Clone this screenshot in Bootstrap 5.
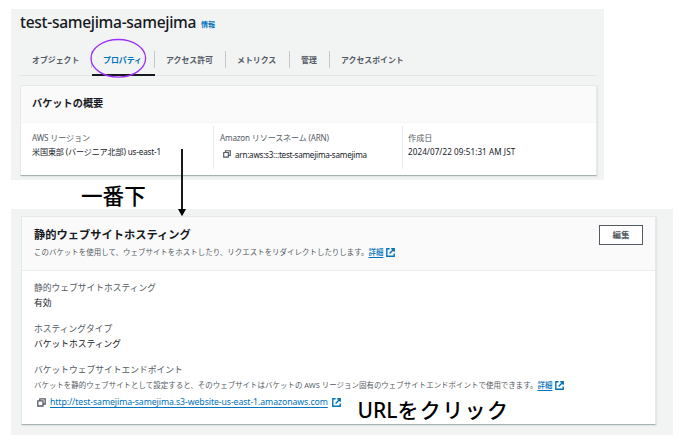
<!DOCTYPE html>
<html lang="ja">
<head>
<meta charset="utf-8">
<meta name="viewport" content="width=device-width, initial-scale=1">
<title>test-samejima-samejima</title>
<link href="https://cdn.jsdelivr.net/npm/bootstrap@5.3.0/dist/css/bootstrap.min.css" rel="stylesheet">
<style>
  body { font-family: "Noto Sans", "Noto Sans CJK JP", sans-serif; font-size: 8.1px; line-height: 14px; color: #16191f; background: #fff; width: 680px; height: 442px; overflow: hidden; padding: 9px 0 0 11px; white-space: nowrap; }
  a { color: #0073bb; }
  .bucket-panel { background: #f2f3f3; width: 593px; height: 171px; padding: 0 7px 0 9px; }
  .hosting-panel { background: #f2f3f3; width: 662px; height: 226px; padding: 7px 17px 0 10px; margin-top: 29px; }
  .title-row { height: 26px; }
  .bucket-title { font-size: 15.6px; font-weight: 500; line-height: 27px; margin: 0; letter-spacing: -.32px; }
  .info-link { font-size: 7px; font-weight: 700; line-height: 31px; text-decoration: none; margin-left: 5px; }
  .bucket-tabs { height: 25px; margin-top: 16px; border-bottom: 1px solid #e3e6e6; flex-wrap: nowrap; }
  .bucket-tabs .nav-link { position: relative; padding: 0 12px; height: 25px; line-height: 18px; font-size: 7.9px; font-weight: 700; color: #545b64; }
  .bucket-tabs .nav-item + .nav-item .nav-link::before { content: ""; position: absolute; left: 0; top: 0; width: 1px; height: 17px; background: #c3c8c9; }
  .bucket-tabs .nav-link.active { color: #0073bb; }
  .bucket-tabs .nav-link.active::after { content: ""; position: absolute; left: 1px; right: -1px; bottom: 0; height: 2px; background: #16191f; }
  .t1 { width: 71px; } .t2 { width: 63px; } .t3 { width: 71px; } .t4 { width: 64px; } .t5 { width: 40px; }
  .aws-card { border: 1px solid #e6e9e9; border-bottom-color: #a9b2b2; border-radius: 0; box-shadow: 1px 1px 1px #e2e6e6; }
  .aws-card .card-header { background: #fafafa; border-bottom: 1px solid #eaeded; border-radius: 0; }
  .overview { margin-top: 9px; height: 91px; }
  .overview .card-header { height: 37px; padding: 9px 11px; border-bottom-color: #f5f6f6; }
  .overview h2 { font-size: 10.2px; font-weight: 700; line-height: 16px; margin: 0; }
  .facts { padding-top: 3px; }
  .fact { height: 43px; padding: 5px 0 0 6px; line-height: 13.5px; }
  .fact + .fact { border-left: 1px solid #eaeded; }
  .fact.region { width: 192px; padding-left: 11px; letter-spacing: -.15px; }
  .fact.arn { width: 189px; letter-spacing: -.18px; }
  .fact.created { padding-left: 5px; letter-spacing: .08px; }
  .arn-value { margin-top: 3px; padding-left: 3px; letter-spacing: -.24px; }
  .dim { color: #545b64; }
  .hosting { height: 209px; }
  .hosting .card-header { height: 54px; padding: 10px 12px 0 12px; }
  .hosting h2 { font-size: 11.25px; font-weight: 700; line-height: 16px; margin: 0; }
  .note { font-size: 7.47px; color: #545b64; line-height: 14px; }
  .note a { font-weight: 500; }
  .note svg { margin-left: 3px; }
  .hosting .card-header .note { margin-top: 2px; }
  .edit-btn { width: 44px; height: 20px; margin: -2px 0 0 0; padding: 0; border: 1px solid #545b64; border-radius: 0; background: #fff; color: #545b64; font-size: 8.5px; font-weight: 700; line-height: 18px; }
  .hosting .card-body { padding: 10px 12px; font-size: 8.75px; }
  .fieldset-gap { margin-bottom: 12px; height: 29px; line-height: 15px; }
  .endpoint { height: 15px; line-height: 14px; }
  .url-row { font-size: 8.75px; margin: 3px 0 0 3px; letter-spacing: -.1px; }
  .url-row a, .note a { text-underline-offset: 2px; }
  svg { display: inline-block; flex: none; }
  .annot { position: absolute; color: #000; font-weight: 500; }
  .a-bottom { left: 81px; top: 181px; font-size: 21.6px; line-height: 30px; }
  .a-click { left: 357.5px; top: 395px; font-size: 21px; line-height: 30px; }
  .a-click span { letter-spacing: 1.35px; }
  .a-lines { position: absolute; left: 0; top: 0; pointer-events: none; }
</style>
<script src="https://cdn.jsdelivr.net/npm/bootstrap@5.3.0/dist/js/bootstrap.bundle.min.js"></script>
</head>
<body>
<svg width="0" height="0" class="position-absolute">
  <symbol id="copy" viewBox="0 0 9 9"><path d="M.8 2.8h5.2v5.2H.8zM2.8 2.6V.8h5.4v5.2H6.2" fill="none" stroke="#545b64" stroke-width="1.3"/></symbol>
  <symbol id="ext" viewBox="0 0 9 9"><path d="M3.6.8H.8v7.4h7.4V5.4M5.2.8h3v3M8 1 3.6 5.4" fill="none" stroke="#0073bb" stroke-width="1.4"/></symbol>
</svg>

<section class="bucket-panel">
  <div class="title-row d-flex align-items-start"><h1 class="bucket-title">test-samejima-samejima</h1><a href="#" class="info-link">情報</a></div>
  <ul class="nav bucket-tabs">
    <li class="nav-item t1"><a class="nav-link" href="#">オブジェクト</a></li>
    <li class="nav-item t2"><a class="nav-link active" href="#">プロパティ</a></li>
    <li class="nav-item t3"><a class="nav-link" href="#">アクセス許可</a></li>
    <li class="nav-item t4"><a class="nav-link" href="#">メトリクス</a></li>
    <li class="nav-item t5"><a class="nav-link" href="#">管理</a></li>
    <li class="nav-item"><a class="nav-link" href="#">アクセスポイント</a></li>
  </ul>
  <div class="card aws-card overview">
    <div class="card-header"><h2>バケットの概要</h2></div>
    <div class="facts d-flex">
      <div class="fact region"><div class="dim">AWS リージョン</div><div>米国東部 (バージニア北部) us-east-1</div></div>
      <div class="fact arn"><div class="dim">Amazon リソースネーム (ARN)</div><div class="arn-value d-flex align-items-center"><svg width="8" height="8" class="me-1"><use href="#copy"/></svg><span>arn:aws:s3:::test-samejima-samejima</span></div></div>
      <div class="fact created"><div class="dim">作成日</div><div>2024/07/22 09:51:31 AM JST</div></div>
    </div>
  </div>
</section>

<section class="hosting-panel">
  <div class="card aws-card hosting">
    <div class="card-header d-flex justify-content-between">
      <div><h2>静的ウェブサイトホスティング</h2>
        <div class="note d-flex align-items-center"><span>このバケットを使用して、ウェブサイトをホストしたり、リクエストをリダイレクトしたりします。</span><a href="#">詳細</a><svg width="9" height="9"><use href="#ext"/></svg></div></div>
      <button type="button" class="btn edit-btn">編集</button>
    </div>
    <div class="card-body">
      <div class="fieldset-gap"><div class="dim">静的ウェブサイトホスティング</div><div>有効</div></div>
      <div class="fieldset-gap"><div class="dim">ホスティングタイプ</div><div>バケットホスティング</div></div>
      <div class="dim endpoint">バケットウェブサイトエンドポイント</div>
      <div class="note d-flex align-items-center"><span>バケットを静的ウェブサイトとして設定すると、そのウェブサイトはバケットの AWS リージョン固有のウェブサイトエンドポイントで使用できます。</span><a href="#">詳細</a><svg width="9" height="9"><use href="#ext"/></svg></div>
      <div class="url-row d-flex align-items-center"><svg width="9" height="9" class="me-1"><use href="#copy"/></svg><a href="#">http://test-samejima-samejima.s3-website-us-east-1.amazonaws.com</a><svg width="9" height="9" class="ms-1"><use href="#ext"/></svg></div>
    </div>
  </div>
</section>

<svg class="a-lines" width="680" height="442">
  <ellipse cx="118.3" cy="58.3" rx="27.3" ry="18.8" fill="none" stroke="#9b30f5" stroke-width="1.3"/>
  <path d="M182 149v61" stroke="#000" stroke-width="1.8"/><path d="M178 209h8l-4 7.3z"/>
</svg>
<div class="annot a-bottom">一番下</div>
<div class="annot a-click">URL<span>をクリック</span></div>
</body>
</html>
